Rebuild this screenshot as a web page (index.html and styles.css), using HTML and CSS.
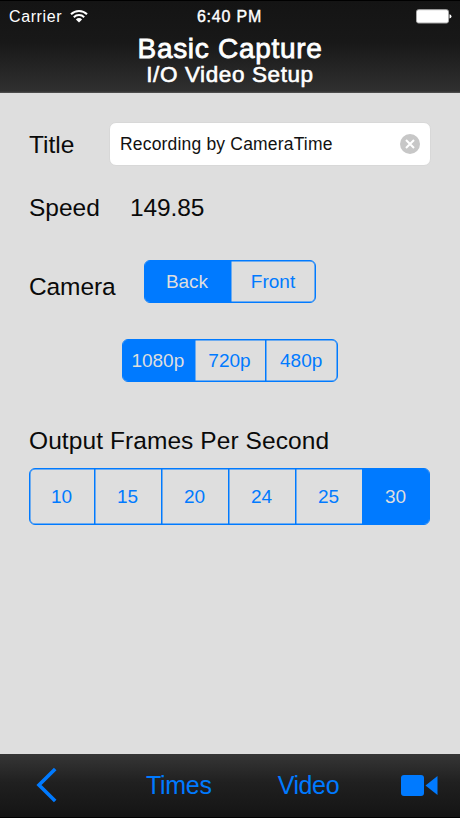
FILE: index.html
```html
<!DOCTYPE html>
<html lang="en">
<head>
<meta charset="utf-8">
<title>Basic Capture</title>
<link rel="stylesheet" href="styles.css">
</head>
<body>
<div class="screen">
  <header class="header">
    <div class="status">
      <div class="carrier"><span class="carrier-name">Carrier</span>
        <svg class="wifi" width="18" height="14" viewBox="0 0 18 14" fill="none" stroke="#fff" stroke-width="2">
          <path d="M1 5.2a11.4 11.4 0 0 1 16 0"/>
          <path d="M3.8 8.2a7.4 7.4 0 0 1 10.400 0"/>
          <path d="M9 13.500L5.900 10.400a4.400 4.400 0 0 1 6.200 0z" fill="#fff" stroke="none"/>
        </svg>
      </div>
      <span class="time">6:40 PM</span>
      <svg class="battery" width="36" height="15" viewBox="0 0 36 15">
        <rect x=".5" y=".7" width="32" height="13.300" rx="2" fill="#fff" stroke="#aaa"/>
        <path d="M33.500 5.200q2 .6 2 2.200t-2 2.200z" fill="#fff"/>
      </svg>
    </div>
    <h1 class="title">Basic Capture</h1>
    <h2 class="subtitle">I/O Video Setup</h2>
  </header>
  <main class="form">
    <div class="row row-title">
      <span class="label label-title">Title</span>
      <div class="field"><span class="field-text">Recording by CameraTime</span>
        <svg width="20" height="20" viewBox="0 0 20 20"><circle cx="10" cy="10" r="10" fill="#c7c7c7"/><path d="M6 6l8 8M14 6l-8 8" stroke="#fff" stroke-width="2"/></svg>
      </div>
    </div>
    <div class="row row-speed"><span class="label label-speed">Speed</span><span class="label value">149.85</span></div>
    <div class="row row-camera">
      <span class="label label-camera">Camera</span>
      <div class="segments camera"><span class="on back">Back</span><span class="front">Front</span></div>
    </div>
    <div class="segments resolution"><span class="on">1080p</span><span>720p</span><span>480p</span></div>
    <div class="label label-fps">Output Frames Per Second</div>
    <div class="segments fps"><span>10</span><span>15</span><span>20</span><span>24</span><span>25</span><span class="on">30</span></div>
  </main>
  <footer class="toolbar">
    <svg class="chevron" width="22" height="36" viewBox="0 0 22 36"><path d="M19.200 2L3 18l16.200 16" fill="none" stroke="#007aff" stroke-width="3.600"/></svg>
    <span class="times">Times</span>
    <span class="video">Video</span>
    <svg class="camcorder" width="37" height="21" viewBox="0 0 37 21" fill="#007aff"><rect width="23" height="21" rx="3"/><path d="M24.500 10.500L36.500 1v19z"/></svg>
  </footer>
</div>
</body>
</html>
```
FILE: styles.css
```css
* { box-sizing: border-box; }
body { margin: 0; font-family: "Liberation Sans", Arial, sans-serif; }
.screen { width: 460px; height: 818px; display: flex; flex-direction: column; background: #dedede; overflow: hidden; white-space: nowrap; }
.header { height: 93px; flex: none; background: linear-gradient(#141414, #181818 45%, #303030 98%, #555); border-top: 1px solid #000; color: #fff; text-align: center; }
.status { height: 32px; display: grid; grid-template-columns: 1fr auto 1fr; align-items: center; padding: 0 8px 0 9px; font-size: 16px; line-height: 32px; }
.carrier { display: flex; align-items: center; gap: 8px; }
.carrier-name { letter-spacing: .6px; }
.wifi { margin-top: -3px; }
.time { margin-left: -2px; -webkit-text-stroke: .4px #fff; letter-spacing: .8px; }
.battery { justify-self: end; margin-top: -2px; }
.title { margin: 0; font-size: 28px; line-height: 32px; font-weight: 400; letter-spacing: .7px; -webkit-text-stroke: .8px #fff; }
.subtitle { margin: 0; font-size: 22.500px; line-height: 20px; font-weight: 400; letter-spacing: .6px; -webkit-text-stroke: .6px #fff; }
.form { flex: 1; padding: 29px 29px 0; }
.row { display: flex; align-items: center; height: 44px; }
.label { font-size: 24.500px; line-height: 30px; color: #0a0a0a; letter-spacing: 0; }
.label-title { width: 80px; flex: none; margin-top: 1px; }
.field { width: 322px; flex: none; height: 44px; display: flex; align-items: center; justify-content: space-between; padding: 0 10px 0 9px; border-radius: 7px; background: #fff; border: 1px solid #d8d8d8; color: #111; }
.field-text { font-size: 17.500px; letter-spacing: .18px; }
.row-title .field-text { padding-left: 1px; }
.row-speed { margin-top: 20px; }
.label-speed { width: 101px; }
.value { letter-spacing: -.1px; }
.row-camera { margin-top: 25px; height: 54px; align-items: flex-start; }
.label-camera { width: 115px; margin-top: 17px; letter-spacing: -.1px; }
.segments { display: flex; height: 43px; border: 1px solid #007aff; box-shadow: inset 0 0 0 .5px #007aff; border-radius: 6px; overflow: hidden; color: #007aff; font-size: 19px; }
.segments span { flex: 1; display: flex; align-items: center; justify-content: center; border-left: 1px solid #007aff; box-shadow: inset .5px 0 #007aff; }
.segments span:first-child { border-left: 0; box-shadow: none; }
.segments .on { background: #007aff; color: #dedede; }
.camera { width: 172px; margin-top: 5px; }
.camera .back { flex: none; width: 85px; padding-right: 1px; }
.resolution { width: 216px; margin: 30px 0 0 93px; }
.resolution span { padding-right: 1px; }
.label-fps { margin-top: 44px; letter-spacing: .08px; }
.fps { width: 401px; height: 57px; margin-top: 12px; }
.fps span { padding-right: 1px; }
.fps span:first-child { flex: none; width: 64px; padding-right: 1px; }
.toolbar { flex: none; height: 64px; display: flex; align-items: center; padding: 0 22px 1px 36px; background: linear-gradient(#363636, #202020 45%, #141414); border-bottom: 1px solid #000; color: #007aff; font-size: 25px; }
.times { margin-left: 88px; letter-spacing: -.3px; }
.video { margin-left: 66px; letter-spacing: -.4px; }
.camcorder { margin-left: auto; }
```
